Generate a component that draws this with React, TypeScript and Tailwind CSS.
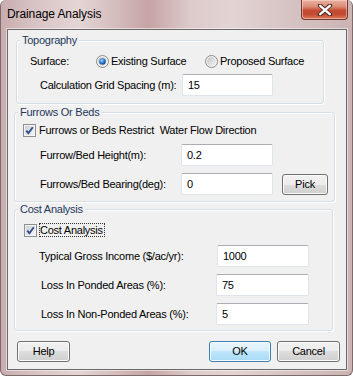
import React from "react";

const inputCls =
  "h-[22px] bg-white border border-[#dfe3ea] border-t-[#abadb3] rounded-[2px] pl-[5px] flex items-center text-black";

function Input({ value, w }: { value: string; w: string }) {
  return <div className={`${inputCls} ${w}`}>{value}</div>;
}

function Btn({ label, w, def }: { label: string; w: string; def?: boolean }) {
  return (
    <div
      className={`${w} h-[21px] rounded-[3px] border flex items-center justify-center text-black ${
        def
          ? "border-[#3c7fb1] bg-[linear-gradient(#eaf6fd_0%,#d9f0fc_50%,#bee6fd_50%,#a7d9f5_100%)] shadow-[inset_0_0_0_1px_#f4fbfe]"
          : "border-[#707070] bg-[linear-gradient(#f2f2f2_0%,#ebebeb_50%,#dddddd_50%,#cfcfcf_100%)] shadow-[inset_0_0_0_1px_#fbfbfb]"
      }`}
    >
      {label}
    </div>
  );
}

function Radio({ checked }: { checked?: boolean }) {
  return (
    <svg width="13" height="13" viewBox="0 0 13 13" className="shrink-0">
      <defs>
        <linearGradient id="rb" x1="0" y1="0" x2="1" y2="1">
          <stop offset="0" stopColor="#c4c4c4" />
          <stop offset="1" stopColor="#f4f4f4" />
        </linearGradient>
        <radialGradient id="rd" cx="0.4" cy="0.35" r="0.7">
          <stop offset="0" stopColor="#a6d4fb" />
          <stop offset="0.5" stopColor="#2f7fd0" />
          <stop offset="1" stopColor="#163f7c" />
        </radialGradient>
      </defs>
      <circle cx="6.5" cy="6.5" r="6" fill="#f4f4f4" stroke="#8a8a8a" strokeWidth="1" />
      <circle cx="6.5" cy="6.5" r="4.5" fill="url(#rb)" />
      {checked && <circle cx="6.5" cy="6.5" r="3.3" fill="url(#rd)" />}
    </svg>
  );
}

function Check() {
  return (
    <svg width="13" height="13" viewBox="0 0 13 13" className="shrink-0">
      <defs>
        <linearGradient id="cb" x1="0" y1="0" x2="1" y2="1">
          <stop offset="0" stopColor="#cbcfd5" />
          <stop offset="1" stopColor="#f6f6f6" />
        </linearGradient>
      </defs>
      <rect x="0.5" y="0.5" width="12" height="12" fill="#f4f4f4" stroke="#8e8f8f" />
      <rect x="2" y="2" width="9" height="9" fill="url(#cb)" />
      <path d="M3.3 6.6 L5.4 9.2 L9.8 3.2" fill="none" stroke="#324d8d" strokeWidth="1.9" />
    </svg>
  );
}

function Group({
  title,
  cls,
  children,
}: {
  title: string;
  cls: string;
  children: React.ReactNode;
}) {
  return (
    <div
      className={`relative border border-[#d5dfe5] rounded-[3px] shadow-[inset_1px_1px_0_#ffffff,1px_1px_0_#ffffff] flex flex-col ${cls}`}
    >
      <span className="absolute left-[3px] top-[-7px] px-[2px] bg-[#f0f0f0] leading-[13px] text-[#1e395b]">
        {title}
      </span>
      {children}
    </div>
  );
}

export default function App() {
  return (
    <div className="w-[353px] h-[376px] flex flex-col overflow-hidden rounded-[6px] border-x border-b border-[#7d6a6b] bg-[linear-gradient(90deg,#c9acae_0%,#d9c4c5_10%,#e4d5d5_22%,#d3b9ba_34%,#c6a3a5_42%,#ddcaca_54%,#e3d4d4_66%,#d8c5c5_80%,#ccb3b4_100%)] font-['Liberation_Sans',Arial,sans-serif] text-[11px] tracking-[-0.25px] text-black">
      <div className="h-[29px] flex items-start shrink-0">
        <div className="ml-[6px] mt-[7px] text-[12px] tracking-[-0.1px] leading-[15px] text-black">
          Drainage Analysis
        </div>
        <div className="flex-1" />
        <div className="mr-[4px] w-[47px] h-[20px] rounded-b-[4px] border border-t-0 border-[#6e3a33] bg-[linear-gradient(#eab1a3_0%,#dc8b76_35%,#c44a33_55%,#c24a32_75%,#dd7a5c_100%)] shadow-[inset_0_0_0_1px_rgba(255,220,210,0.5)] flex items-center justify-center">
          <svg width="16" height="12" viewBox="0 0 16 12">
            <path d="M3 1.5 L13 10.5 M13 1.5 L3 10.5" stroke="#4a2620" strokeWidth="4.2" strokeLinecap="round" />
            <path d="M3.2 1.8 L12.8 10.2 M12.8 1.8 L3.2 10.2" stroke="#ffffff" strokeWidth="2.4" strokeLinecap="round" />
          </svg>
        </div>
      </div>

      <div className="ml-[6px] w-[340px] h-[341px] border border-[#6a6a6a] bg-[#f0f0f0] flex flex-col shadow-[0_0_0_1px_rgba(255,255,255,0.5)]">
        <Group title="Topography" cls="ml-[8px] mt-[10px] w-[308px] h-[64px]">
          <div className="mt-[14px] h-[13px] flex items-center">
            <span className="ml-[13px] w-[66px]">Surface:</span>
            <div className="w-[109px] flex items-center">
              <Radio checked />
              <span className="ml-[2px]">Existing Surface</span>
            </div>
            <div className="flex items-center">
              <Radio />
              <span className="ml-[2px]">Proposed Surface</span>
            </div>
          </div>
          <div className="mt-[6px] h-[22px] flex items-center">
            <span className="ml-[23px] w-[142px]">Calculation Grid Spacing (m):</span>
            <Input value="15" w="w-[91px]" />
          </div>
        </Group>

        <Group title="Furrows Or Beds" cls="ml-[6px] mt-[8px] w-[321px] h-[90px]">
          <div className="mt-[11px] h-[13px] flex items-center">
            <span className="ml-[8px] flex">
              <Check />
            </span>
            <span className="ml-[3px] whitespace-pre">Furrows or Beds Restrict  Water Flow Direction</span>
          </div>
          <div className="mt-[7px] h-[22px] flex items-center">
            <span className="ml-[25px] w-[141px]">Furrow/Bed Height(m):</span>
            <Input value="0.2" w="w-[92px]" />
          </div>
          <div className="mt-[7px] h-[22px] flex items-center">
            <span className="ml-[25px] w-[141px]">Furrows/Bed Bearing(deg):</span>
            <Input value="0" w="w-[92px]" />
            <div className="ml-[9px]">
              <Btn label="Pick" w="w-[46px]" />
            </div>
          </div>
        </Group>

        <Group title="Cost Analysis" cls="ml-[6px] mt-[7px] w-[319px] h-[122px]">
          <div className="mt-[13px] h-[14px] flex items-center">
            <span className="ml-[9px] flex">
              <Check />
            </span>
            <span className="ml-[2px] h-[14px] leading-[12px] border border-dotted border-[#333] pr-[1px]">
              Cost Analysis
            </span>
          </div>
          <div className="mt-[8px] h-[22px] flex items-center">
            <span className="ml-[24px] w-[178px]">Typical Gross Income ($/ac/yr):</span>
            <Input value="1000" w="w-[92px]" />
          </div>
          <div className="mt-[7px] h-[22px] flex items-center">
            <span className="ml-[26px] w-[175px]">Loss In Ponded Areas (%):</span>
            <Input value="75" w="w-[93px]" />
          </div>
          <div className="mt-[7px] h-[22px] flex items-center">
            <span className="ml-[26px] w-[175px]">Loss In Non-Ponded Areas (%):</span>
            <Input value="5" w="w-[93px]" />
          </div>
        </Group>

        <div className="mt-[10px] h-[21px] flex items-center">
          <div className="ml-[9px]">
            <Btn label="Help" w="w-[53px]" />
          </div>
          <div className="flex-1" />
          <Btn label="OK" w="w-[62px]" def />
          <div className="ml-[6px] mr-[6px]">
            <Btn label="Cancel" w="w-[63px]" />
          </div>
        </div>
      </div>
    </div>
  );
}
